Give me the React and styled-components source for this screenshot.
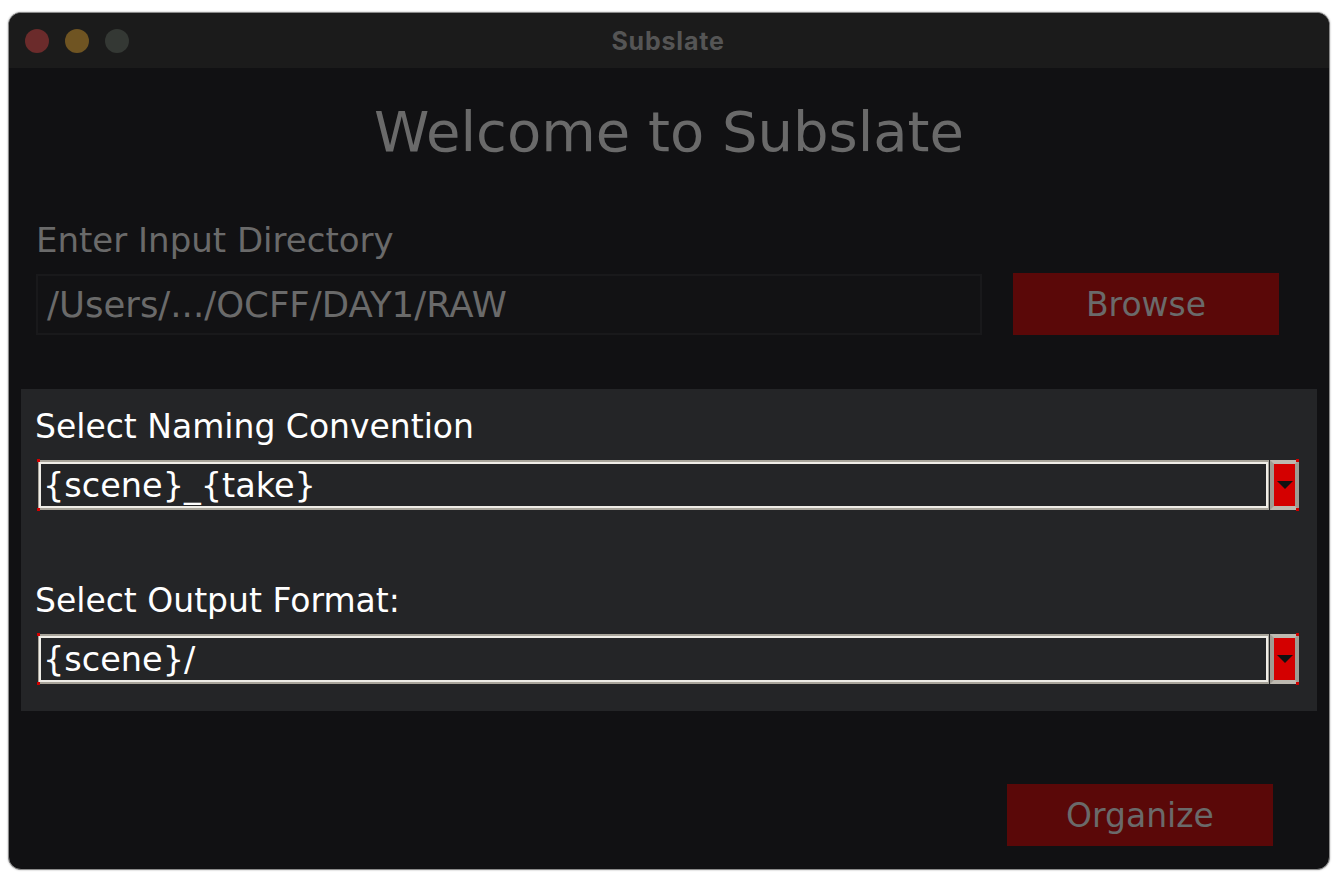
import React from "react";
import styled, { createGlobalStyle } from "styled-components";

const GlobalStyle = createGlobalStyle`
  html, body {
    margin: 0;
    padding: 0;
    background: #ffffff;
  }
  body {
    font-family: "DejaVu Sans", Verdana, sans-serif;
  }
`;

const Page = styled.div`
  width: 1342px;
  height: 888px;
  padding: 12px 12px 0 8px;
  box-sizing: border-box;
`;

const Window = styled.div`
  width: 1322px;
  height: 858px;
  box-sizing: border-box;
  border: 1px solid #8a8a8a;
  border-radius: 13px;
  overflow: hidden;
  background: #111113;
  display: flex;
  flex-direction: column;
  box-shadow: 0 0 2px rgba(0, 0, 0, 0.35);
`;

const TitleBar = styled.div`
  height: 55px;
  flex: none;
  background: #1b1b1b;
  display: grid;
  grid-template-columns: 1fr auto 1fr;
  align-items: center;
  padding: 0 16px;
`;

const Lights = styled.div`
  display: flex;
  gap: 16px;
`;

const Light = styled.span`
  width: 24px;
  height: 24px;
  border-radius: 50%;
  background: ${(p) => p.$color};
`;

const WindowTitle = styled.div`
  font-family: Inter, "Open Sans", sans-serif;
  font-weight: 700;
  font-size: 25px;
  letter-spacing: 0.8px;
  color: #555555;
  margin-left: -2px;
`;

const Body = styled.div`
  flex: 1;
  display: flex;
  flex-direction: column;
  padding: 34px 12px 0 12px;
`;

const Heading = styled.h1`
  margin: 0;
  height: 60px;
  line-height: 60px;
  text-align: center;
  font-weight: 400;
  font-size: 56px;
  color: #6a6a6a;
`;

const Label = styled.div`
  height: 34px;
  line-height: 34px;
  font-size: ${(p) => (p.$dim ? 34 : 33)}px;
  color: ${(p) => (p.$dim ? "#6a6a6a" : "#ffffff")};
  margin-top: ${(p) => p.$top}px;
  padding-left: ${(p) => (p.$dim ? 15 : 14)}px;
  white-space: nowrap;
`;

const InputRow = styled.div`
  margin-top: 16px;
  display: flex;
  align-items: center;
  gap: 31px;
  padding: 0 38px 0 15px;
`;

const PathInput = styled.div`
  flex: 1;
  height: 61px;
  box-sizing: border-box;
  border: 2px solid #19191b;
  background: #121214;
  display: flex;
  align-items: center;
  padding-left: 9px;
  font-size: 35.5px;
  color: #6a6a6a;
  white-space: nowrap;
`;

const DarkButton = styled.div`
  width: 266px;
  height: 62px;
  background: #5a0808;
  color: #6a6a6a;
  font-size: 33px;
  display: flex;
  align-items: center;
  justify-content: center;
  align-self: ${(p) => p.$align || "auto"};
  margin-right: ${(p) => p.$right || 0}px;
  margin-top: ${(p) => p.$top || 0}px;
`;

const Panel = styled.div`
  margin-top: 54px;
  background: #242527;
  padding: 21px 18px 27px 0;
  display: flex;
  flex-direction: column;
`;

const Combo = styled.div`
  margin-top: 16px;
  margin-left: 17px;
  height: 50px;
  display: flex;
  position: relative;
`;

const ComboEntry = styled.div`
  flex: 1;
  box-sizing: border-box;
  border-top: 2px solid #a8a49a;
  border-bottom: 2px solid #a8a49a;
  border-left: 1px solid #a8a49a;
  border-right: 1px solid #a8a49a;
  box-shadow: inset 0 0 0 2px #efede7;
  display: flex;
  align-items: center;
  padding-left: 4px;
  font-size: 33.5px;
  color: #ffffff;
  background: #242527;
  white-space: nowrap;
`;

const ComboButton = styled.div`
  width: 29px;
  margin-left: 1px;
  box-sizing: border-box;
  border: 4px solid #bdb9b0;
  border-left-color: #a09c93;
  border-right-color: #a09c93;
  background: #d40000;
  display: flex;
  align-items: center;
  justify-content: center;
`;

const Corner = styled.span`
  position: absolute;
  width: 3px;
  height: 3px;
  background: #d00000;
  left: ${(p) => p.$x};
  top: ${(p) => p.$y};
`;

function Dropdown({ value }) {
  return (
    <Combo>
      <ComboEntry>{value}</ComboEntry>
      <ComboButton>
        <svg width="16" height="9" viewBox="0 0 16 9">
          <polygon points="0,0 16,0 8,8" fill="#111" />
        </svg>
      </ComboButton>
      <Corner $x="-1px" $y="-1px" />
      <Corner $x="-1px" $y="calc(100% - 2px)" />
      <Corner $x="calc(100% - 3px)" $y="-1px" />
      <Corner $x="calc(100% - 3px)" $y="calc(100% - 2px)" />
    </Combo>
  );
}

export default function App() {
  return (
    <>
      <GlobalStyle />
      <Page>
        <Window>
          <TitleBar>
            <Lights>
              <Light $color="#6b2b2b" />
              <Light $color="#6f5422" />
              <Light $color="#343834" />
            </Lights>
            <WindowTitle>Subslate</WindowTitle>
            <div />
          </TitleBar>
          <Body>
            <Heading>Welcome to Subslate</Heading>
            <Label $dim $top={61}>
              Enter Input Directory
            </Label>
            <InputRow>
              <PathInput>/Users/.../OCFF/DAY1/RAW</PathInput>
              <DarkButton>Browse</DarkButton>
            </InputRow>
            <Panel>
              <Label $top={0}>Select Naming Convention</Label>
              <Dropdown value="{scene}_{take}" />
              <Label $top={74}>Select Output Format:</Label>
              <Dropdown value="{scene}/" />
            </Panel>
            <DarkButton $align="flex-end" $right={44} $top={73}>
              Organize
            </DarkButton>
          </Body>
        </Window>
      </Page>
    </>
  );
}
